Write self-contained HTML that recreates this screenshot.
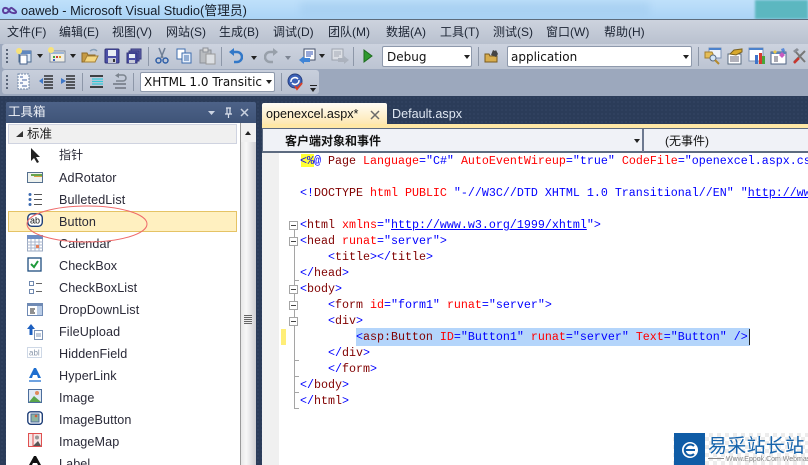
<!DOCTYPE html>
<html><head><meta charset="utf-8"><style>
html,body{margin:0;padding:0;width:808px;height:465px;overflow:hidden}
body{background:#2b3c59;font-family:"Liberation Sans","Noto Sans CJK SC",sans-serif;font-size:12px;color:#111}
div,span,svg{position:absolute}
#root{left:0;top:0;width:808px;height:465px;overflow:hidden}
.t{white-space:nowrap}
.m{top:23px;font-size:12px;color:#1c2433;white-space:nowrap}
.sep{width:1px;background:#8d97a8}
.ar{width:0;height:0;border:3.5px solid transparent;border-top:4px solid #222;border-bottom:0}
.grip{width:2px;height:14px;background:repeating-linear-gradient(#5a6578 0 2px,transparent 2px 4px)}
.combo{background:#fff;border:1px solid #8e99ac;border-radius:2px;box-sizing:border-box;font-family:"DejaVu Sans",sans-serif;font-size:12px;color:#111;white-space:nowrap;overflow:hidden}
.i{left:59px;font-size:12.6px;letter-spacing:.1px;color:#2a2a38;white-space:nowrap;height:16px;line-height:16px}
.l{left:300px;font-family:"Liberation Mono",monospace;font-size:11.67px;line-height:16px;height:16px;white-space:pre;color:#00f}
.l span{position:static}
.r{color:#f00}.d{color:#800000}
.u{text-decoration:underline}
.box{left:289px;width:7px;height:7px;border:1px solid #a5a5a5;background:#fff}
.box:after{content:"";position:absolute;left:1px;top:3px;width:5px;height:1px;background:#444}
</style></head><body>
<div id="root">

<!-- title bar -->
<div style="left:0;top:0;width:808px;height:20px;background:linear-gradient(#bfe0fa,#a9d3f6)"></div>
<div style="left:300px;top:2px;width:350px;height:14px;background:#9cc7ec;opacity:.45;filter:blur(4px)"></div>
<div style="left:755px;top:0;width:53px;height:19px;background:#5cb7c0;filter:blur(1px)"></div>
<div style="left:0;top:19px;width:808px;height:1px;background:#5d6c7c"></div>
<svg style="left:1px;top:5px" width="16" height="11" viewBox="0 0 16 11"><path d="M8 5.500C6 2 2 2 2 5.500S6 9 8 5.500 10 2 14 5.500 10 9 8 5.500" fill="none" stroke="#5b3f9c" stroke-width="2"/></svg>
<div class="t" style="left:21px;top:2px;font-size:12.8px;color:#161d28;line-height:17px">oaweb - Microsoft Visual Studio(管理员)</div>

<!-- menu -->
<div style="left:0;top:20px;width:808px;height:24px;background:linear-gradient(#cdd3de,#b9c1cf)"></div>
<div style="left:0;top:44px;width:808px;height:52px;background:#9ca8bd"></div>
<div class="m" style="left:7px">文件(F)</div>
<div class="m" style="left:59px">编辑(E)</div>
<div class="m" style="left:112px">视图(V)</div>
<div class="m" style="left:166px">网站(S)</div>
<div class="m" style="left:219px">生成(B)</div>
<div class="m" style="left:273px">调试(D)</div>
<div class="m" style="left:328px">团队(M)</div>
<div class="m" style="left:386px">数据(A)</div>
<div class="m" style="left:440px">工具(T)</div>
<div class="m" style="left:493px">测试(S)</div>
<div class="m" style="left:546px">窗口(W)</div>
<div class="m" style="left:604px">帮助(H)</div>

<!-- toolbar 1 -->
<div style="left:2px;top:44px;width:806px;height:25px;background:linear-gradient(#cdd3df,#bcc4d2);border-radius:3px 0 0 3px"></div>
<div class="grip" style="left:6px;top:49px"></div>
<svg style="left:15px;top:47px" width="18" height="18"><rect x="4" y="4" width="12" height="11" fill="#dfeaf6" stroke="#4a6a90"/><rect x="5" y="4" width="11" height="3" fill="#5f88c0"/><rect x="5" y="8" width="7" height="9" fill="#fff" stroke="#44618c"/><circle cx="4" cy="4" r="3" fill="#f7e27a"/></svg>
<div class="ar" style="left:37px;top:54px"></div>
<svg style="left:48px;top:47px" width="18" height="18"><rect x="2" y="4" width="15" height="11" fill="#f1eee2" stroke="#7d8aa0"/><rect x="3" y="5" width="13" height="2" fill="#9db5d6"/><rect x="5" y="9" width="2" height="2" fill="#3da13d"/><rect x="8" y="9" width="2" height="2" fill="#d03a3a"/><rect x="11" y="9" width="2" height="2" fill="#d8a020"/><rect x="5" y="12" width="2" height="2" fill="#3f62c0"/><circle cx="3" cy="3" r="3" fill="#f7e27a"/></svg>
<div class="ar" style="left:70px;top:54px"></div>
<svg style="left:81px;top:47px" width="18" height="18"><path d="M1 15V6h5l1 2h7v7z" fill="#c69a43" stroke="#8d6a28"/><path d="M3 15l3-6h11l-3 6z" fill="#f4d681" stroke="#a57f35"/><path d="M9 4q4-3 7 0" fill="none" stroke="#88a0b8" stroke-width="1.500"/></svg>
<svg style="left:104px;top:48px" width="16" height="16"><rect x="1" y="1" width="14" height="14" rx="1" fill="#4b4fa6" stroke="#2f3276"/><rect x="4" y="2" width="8" height="6" fill="#e8edf5"/><rect x="4" y="10" width="8" height="5" fill="#c9ccd8"/><rect x="9" y="11" width="2" height="3" fill="#333"/></svg>
<svg style="left:126px;top:48px" width="16" height="16"><rect x="5" y="1" width="10" height="10" fill="#6466b0" stroke="#37397c"/><rect x="3" y="3" width="10" height="10" fill="#5557a8" stroke="#37397c"/><rect x="1" y="5" width="10" height="10" fill="#4b4fa6" stroke="#2f3276"/><rect x="3" y="6" width="6" height="4" fill="#e8edf5"/><rect x="3" y="12" width="6" height="3" fill="#c9ccd8"/></svg>
<div class="sep" style="left:148px;top:47px;height:19px"></div>
<svg style="left:155px;top:47px" width="14" height="18"><path d="M4 1l4 10M10 1L6 11" stroke="#6f7f95" stroke-width="1.500" fill="none"/><circle cx="3.500" cy="13.500" r="2.500" fill="none" stroke="#2f5fa8" stroke-width="1.500"/><circle cx="10.500" cy="13.500" r="2.500" fill="none" stroke="#2f5fa8" stroke-width="1.500"/></svg>
<svg style="left:176px;top:48px" width="17" height="16"><rect x="1" y="1" width="8" height="10" fill="#fff" stroke="#3d6cae"/><rect x="6" y="5" width="9" height="10" fill="#e8f0fb" stroke="#3d6cae"/><path d="M8 8h5M8 10h5M8 12h5" stroke="#3d6cae"/></svg>
<svg style="left:199px;top:47px" width="17" height="18"><rect x="1" y="3" width="11" height="13" fill="#b9bcc0" stroke="#8c9097"/><rect x="4" y="1" width="5" height="4" fill="#d8d8d8" stroke="#8c9097"/><rect x="7" y="7" width="9" height="10" fill="#dcdfe3" stroke="#999"/></svg>
<div class="sep" style="left:221px;top:47px;height:19px"></div>
<svg style="left:229px;top:47px" width="14" height="17"><path d="M3 5h5a4 4 0 0 1 0 10H5" fill="none" stroke="#3278c8" stroke-width="2.500"/><path d="M0 5l5-4v8z" fill="#3278c8"/></svg>
<div class="ar" style="left:251px;top:56px"></div>
<svg style="left:264px;top:47px" width="14" height="17"><path d="M11 5H6a4 4 0 0 0 0 10h3" fill="none" stroke="#98a0aa" stroke-width="2.500"/><path d="M14 5L9 1v8z" fill="#98a0aa"/></svg>
<div class="ar" style="left:285px;top:56px;border-top-color:#7c8492"></div>
<svg style="left:298px;top:47px" width="19" height="18"><rect x="6" y="2" width="11" height="11" fill="#fff" stroke="#44506a"/><path d="M8 5h7M8 7h7M8 9h5" stroke="#2f4fb0"/><path d="M1 13l5-4v2h6v4H6v2z" fill="#3f84d6"/></svg>
<div class="ar" style="left:319px;top:54px"></div>
<svg style="left:331px;top:47px" width="19" height="18" opacity=".55"><rect x="1" y="2" width="11" height="11" fill="#eee" stroke="#7a808a"/><path d="M3 5h7M3 7h7M3 9h5" stroke="#8a8f98"/><path d="M18 13l-5-4v2H7v4h6v2z" fill="#9ba1aa"/></svg>
<div class="sep" style="left:353px;top:47px;height:19px"></div>
<svg style="left:362px;top:48px" width="12" height="16"><path d="M2 2l8 6-8 6z" fill="#2e9a2e" stroke="#1d6b1d"/></svg>
<div class="combo" style="left:382px;top:46px;width:90px;height:21px;line-height:20px;padding-left:4px">Debug</div>
<div class="ar" style="left:464px;top:55px"></div>
<div class="sep" style="left:478px;top:47px;height:19px"></div>
<svg style="left:484px;top:48px" width="15" height="16"><path d="M1 14V6h4l1 2h7v6z" fill="#d8ad4e" stroke="#7a5a1e"/><path d="M7 7l2-5 2 1 1-1 2 4-2 3z" fill="#444"/></svg>
<div class="combo" style="left:507px;top:46px;width:185px;height:21px;line-height:20px;padding-left:3px">application</div>
<div class="ar" style="left:683px;top:55px"></div>
<div class="sep" style="left:698px;top:47px;height:19px"></div>
<svg style="left:704px;top:47px" width="18" height="18"><rect x="5" y="1" width="12" height="10" fill="#eef3fa" stroke="#7d93b4"/><rect x="5" y="1" width="12" height="2" fill="#4c82cc"/><path d="M1 5h7l1 2v4H1z" fill="#e5bd57" stroke="#a47f2c"/><circle cx="9" cy="11" r="3" fill="#d3e6f8" stroke="#5a6b80"/><path d="M11 13l4 4" stroke="#b58a2d" stroke-width="2"/></svg>
<svg style="left:726px;top:47px" width="18" height="18"><rect x="2" y="7" width="13" height="10" fill="#fff" stroke="#5a6b80"/><path d="M4 10h9M4 12h9M4 14h9" stroke="#667"/><path d="M4 7l4-4 8-1v3l-6 3z" fill="#d9a92c" stroke="#7c6220"/></svg>
<svg style="left:748px;top:47px" width="18" height="18"><rect x="1" y="1" width="14" height="13" fill="#fff" stroke="#7d93b4"/><rect x="1" y="1" width="14" height="2" fill="#4c82cc"/><rect x="7" y="8" width="3" height="9" fill="#3f74c9"/><rect x="11" y="6" width="3" height="11" fill="#d63a2e"/><rect x="14" y="9" width="3" height="8" fill="#49a53a"/></svg>
<svg style="left:770px;top:47px" width="18" height="18"><rect x="1" y="5" width="15" height="12" fill="#fff" stroke="#4f6485"/><rect x="1" y="5" width="15" height="2" fill="#5a82b8"/><path d="M4 10h4M4 12h4M4 14h4" stroke="#556"/><path d="M9 8l3-3 3 3-3 3z" fill="#c85ac0"/><path d="M5 3l2 2-2 2-2-2z" fill="#e8c84a"/><path d="M11 2l3-1 1 3-3 1z" fill="#5a8ad8"/></svg>
<svg style="left:792px;top:47px" width="16" height="18"><path d="M2 15L13 4M13 15L3 4" stroke="#777" stroke-width="2"/><path d="M2 16l5-5" stroke="#c8352d" stroke-width="2.500"/><path d="M1 4l4-3 2 2-4 3z" fill="#8a8f98"/></svg>

<!-- toolbar 2 -->
<div style="left:2px;top:70px;width:317px;height:24px;background:linear-gradient(#c8cfdc,#b9c1d0);border-radius:3px"></div>
<div class="grip" style="left:6px;top:75px"></div>
<svg style="left:17px;top:73px" width="13" height="17"><rect x="1" y="1" width="11" height="15" fill="#f8fafd" stroke="#6e86a8" stroke-dasharray="2 1"/><path d="M3 4h3M5 7h5M3 10h3M5 13h5" stroke="#4463a0"/></svg>
<svg style="left:38px;top:73px" width="16" height="17"><path d="M6 3h9M6 6h9M6 9h9M6 12h9M6 15h9" stroke="#111" stroke-width="1.300"/><path d="M1 8l4-3v6z" fill="#3f78c8"/></svg>
<svg style="left:60px;top:73px" width="16" height="17"><path d="M6 3h9M6 6h9M6 9h9M6 12h9M6 15h9" stroke="#111" stroke-width="1.300"/><path d="M6 8L1 5v6z" fill="#3f78c8"/></svg>
<div class="sep" style="left:82px;top:73px;height:18px"></div>
<svg style="left:89px;top:74px" width="15" height="15"><path d="M1 2h13M1 13h13" stroke="#111" stroke-width="1.500"/><path d="M3 5h11M3 7.500h11M3 10h11" stroke="#35c8d8" stroke-width="1.300"/></svg>
<svg style="left:112px;top:73px" width="15" height="17"><path d="M4 8h7a3 3 0 0 0 0-6H6" fill="none" stroke="#7b838e" stroke-width="1.500"/><path d="M7 0L3 2.500 7 5z" fill="#7b838e"/><path d="M1 11h13M3 15h11" stroke="#6e7580" stroke-width="1.500"/></svg>
<div class="sep" style="left:133px;top:73px;height:18px"></div>
<div class="combo" style="left:140px;top:72px;width:135px;height:20px;line-height:18px;padding-left:3px;font-size:12px">XHTML 1.0 Transitic</div>
<div class="ar" style="left:266px;top:80px"></div>
<div class="sep" style="left:281px;top:73px;height:18px"></div>
<svg style="left:287px;top:73px" width="18" height="18"><circle cx="8" cy="8" r="7" fill="#3d62b8" stroke="#27407f"/><path d="M4 9a4 4 0 0 1 7-3M12 7a4 4 0 0 1-7 3" stroke="#fff" fill="none" stroke-width="1.500"/><path d="M8 13l2 3 5-6" stroke="#d8402a" fill="none" stroke-width="2"/></svg>
<div style="left:310px;top:85px;width:7px;height:1px;background:#222"></div>
<div class="ar" style="left:310px;top:88px"></div>

<!-- dark bg -->
<div style="left:0;top:96px;width:808px;height:369px;background-color:#2b3c59;background-image:radial-gradient(#3b4d6c 0.7px,transparent 0.8px);background-size:4px 4px"></div>

<!-- toolbox -->
<div style="left:6px;top:102px;width:250px;height:21px;background:linear-gradient(#4d6288,#3f5478);border-radius:2px 2px 0 0"></div>
<div class="t" style="left:8px;top:104px;font-size:12.5px;color:#f0f3f8;line-height:17px">工具箱</div>
<svg style="left:205px;top:106px" width="50" height="14"><path d="M3 5h7l-3.500 4z" fill="#ccd4e2"/><path d="M21 2h5M22 2v6h3V2M20 8h7M23.500 8v4" stroke="#dde3ee" fill="none" stroke-width="1.200"/><path d="M36 3l7 7M43 3l-7 7" stroke="#c9d1df" stroke-width="1.500"/></svg>
<div style="left:6px;top:123px;width:234px;height:342px;background:#fff"></div>
<div style="left:240px;top:123px;width:16px;height:342px;background:#f0f0f0;border-left:1px solid #9a9a9a;box-sizing:border-box"></div>
<div style="left:241px;top:142px;width:15px;height:323px;background:linear-gradient(90deg,#e8e8e8,#f7f7f7 35%,#cfcfd3)"></div>
<div class="ar" style="left:245px;top:131px;border:3px solid transparent;border-bottom:4px solid #222;border-top:0"></div>
<div style="left:244px;top:315px;width:8px;height:9px;background:repeating-linear-gradient(#666 0 1px,#eee 1px 2px)"></div>
<div style="left:8px;top:124px;width:229px;height:20px;background:#f0f0f0;border:1px solid #cfd3e0;box-sizing:border-box"></div>
<svg style="left:16px;top:131px" width="8" height="7"><path d="M7 0v6H0z" fill="#333"/></svg>
<div class="t" style="left:27px;top:126px;font-size:12.5px;color:#222;line-height:16px">标准</div>

<div style="left:8px;top:211px;width:229px;height:21px;background:#fff0c0;border:1px solid #e5c365;box-sizing:border-box"></div>

<div class="i" style="top:147px;font-size:12px">指针</div>
<div class="i" style="top:170px">AdRotator</div>
<div class="i" style="top:192px">BulletedList</div>
<div class="i" style="top:214px">Button</div>
<div class="i" style="top:236px">Calendar</div>
<div class="i" style="top:258px">CheckBox</div>
<div class="i" style="top:280px">CheckBoxList</div>
<div class="i" style="top:302px">DropDownList</div>
<div class="i" style="top:324px">FileUpload</div>
<div class="i" style="top:346px">HiddenField</div>
<div class="i" style="top:368px">HyperLink</div>
<div class="i" style="top:390px">Image</div>
<div class="i" style="top:412px">ImageButton</div>
<div class="i" style="top:434px">ImageMap</div>
<div class="i" style="top:456px">Label</div>

<svg style="left:27px;top:147px" width="16" height="17"><path d="M4 1v13l3-3 3 5 2-1-3-5h4z" fill="#222"/></svg>
<svg style="left:27px;top:171px" width="17" height="13"><rect x="0.500" y="1.500" width="15" height="10" fill="#eef2ee" stroke="#55708f"/><rect x="4" y="3" width="11" height="2" fill="#67a44e"/><rect x="7" y="5" width="8" height="1" fill="#d8a040"/></svg>
<svg style="left:27px;top:192px" width="16" height="15"><circle cx="3" cy="2.500" r="1.500" fill="#3c6ab0"/><circle cx="3" cy="7.500" r="1.500" fill="#3c6ab0"/><circle cx="3" cy="12.500" r="1.500" fill="#3c6ab0"/><path d="M7 2.500h8M7 7.500h8M7 12.500h8" stroke="#555"/></svg>
<svg style="left:27px;top:213px" width="17" height="15"><rect x="0.800" y="0.800" width="14.500" height="12.500" rx="4" fill="#fff" stroke="#1f3f78" stroke-width="1.400"/><text x="3" y="10.500" font-family="Liberation Sans" font-size="9" fill="#111">ab</text></svg>
<svg style="left:27px;top:235px" width="16" height="17"><rect x="0.500" y="1" width="15" height="15" fill="#fff" stroke="#9aa9c2"/><rect x="0" y="0" width="16" height="4" fill="#6d8cc4"/><path d="M0 7h16M0 10h16M0 13h16M4 4v12M8 4v12M12 4v12" stroke="#a8b5cc"/><rect x="9" y="10" width="3" height="3" fill="#e57f5a"/></svg>
<svg style="left:27px;top:257px" width="16" height="16"><rect x="1" y="1" width="13" height="13" fill="#fff" stroke="#1f4f80" stroke-width="1.300"/><path d="M4 7l3 3 4-6" stroke="#1e9a3a" stroke-width="2" fill="none"/></svg>
<svg style="left:27px;top:280px" width="16" height="16"><rect x="2.500" y="1.500" width="4" height="4" fill="#fff" stroke="#6f88ae"/><rect x="2.500" y="9.500" width="4" height="4" fill="#fff" stroke="#6f88ae"/><path d="M9 3.500h6M9 11.500h6" stroke="#666"/></svg>
<svg style="left:27px;top:302px" width="17" height="15"><rect x="0.500" y="1.500" width="15" height="12" fill="#fff" stroke="#6f8ab4"/><rect x="0" y="1" width="16" height="3" fill="#6f8ab4"/><rect x="10" y="4" width="5" height="9" fill="#b9cce6"/><path d="M3 7h5M3 9h4M3 11h5" stroke="#222"/></svg>
<svg style="left:27px;top:323px" width="17" height="18"><rect x="7.500" y="7.500" width="8" height="9" fill="#fff" stroke="#7c93b6"/><path d="M9 11h5M9 13h5" stroke="#7c93b6"/><path d="M4 1L0 6h2.500v6h3V6H8z" fill="#1c5fc0"/></svg>
<svg style="left:27px;top:345px" width="16" height="15"><rect x="0.500" y="2.500" width="14" height="10" fill="#fff" stroke="#9db0cc" stroke-dasharray="1 1"/><text x="2" y="10.500" font-family="Liberation Sans" font-size="8" fill="#8896aa">abl</text></svg>
<svg style="left:28px;top:367px" width="15" height="17"><path d="M1 11L6 1h2l5 10h-3l-1-3H5l-1 3z" fill="#1f6fd0"/><path d="M1 14h12" stroke="#1f6fd0" stroke-width="1.300"/></svg>
<svg style="left:28px;top:389px" width="15" height="15"><rect x="0.500" y="0.500" width="13" height="13" fill="#dfe8f4" stroke="#4c6d9c"/><path d="M1 13l5-6 7 6z" fill="#5aa54a"/><circle cx="9" cy="4" r="2" fill="#e08a5a"/></svg>
<svg style="left:27px;top:411px" width="17" height="15"><rect x="0.800" y="0.800" width="14.500" height="12.500" rx="3" fill="#fff" stroke="#1f3f78" stroke-width="1.400"/><rect x="4" y="3" width="8" height="8" fill="#8fb4a0" stroke="#4c6d9c"/><circle cx="9" cy="5" r="1.300" fill="#d0603a"/></svg>
<svg style="left:28px;top:433px" width="15" height="15"><rect x="0.500" y="0.500" width="13" height="13" fill="#f6e6e6" stroke="#e05050"/><path d="M5 13L10 8l3 5z" fill="#555"/><circle cx="9" cy="4.500" r="2" fill="#999"/><path d="M5 1v12" stroke="#e05050"/></svg>
<svg style="left:28px;top:456px" width="15" height="9"><path d="M1 9L6 0h2l5 9h-3L9 7H5L4 9z" fill="#111"/></svg>

<svg style="left:20px;top:200px" width="135" height="50"><ellipse cx="67" cy="24" rx="60" ry="18" fill="none" stroke="#ef6a6a" stroke-width="1"/></svg>

<!-- editor -->
<div style="left:262px;top:103px;width:125px;height:22px;background:linear-gradient(#fffdf6,#fde7ae);border-radius:2px 2px 0 0"></div>
<div class="t" style="left:266px;top:106px;font-size:12.6px;color:#111;line-height:16px">openexcel.aspx*</div>
<svg style="left:369px;top:109px" width="12" height="12"><path d="M2 2l8 8M10 2l-8 8" stroke="#6b6b6b" stroke-width="1.500"/></svg>
<div class="t" style="left:392px;top:106px;font-size:12.6px;color:#dfe7f2;line-height:16px">Default.aspx</div>
<div style="left:262px;top:124px;width:546px;height:4px;background:#ffe8a6"></div>
<div style="left:262px;top:128px;width:546px;height:25px;background:#f0f2f7;border:1px solid #5d6b80;border-width:1px 0 2px 1px;box-sizing:border-box"></div>
<div style="left:642px;top:129px;width:2px;height:23px;background:#6d7990"></div>
<div class="ar" style="left:634px;top:139px"></div>
<div class="t" style="left:285px;top:133px;font-size:12px;font-weight:bold;color:#111;line-height:16px">客户端对象和事件</div>
<div class="t" style="left:665px;top:133px;font-size:12px;color:#111;line-height:16px">(无事件)</div>

<div style="left:262px;top:153px;width:546px;height:312px;background:#fff"></div>
<div style="left:262px;top:153px;width:17px;height:312px;background:#f0f0f0"></div>
<div style="left:301px;top:154px;width:13px;height:13px;background:#ffff33"></div>
<div style="left:356px;top:328px;width:394px;height:18px;background:#b4d5fb"></div>
<div style="left:281px;top:329px;width:5px;height:16px;background:#ffee77"></div>
<div style="left:749px;top:329px;width:1px;height:16px;background:#222"></div>

<!-- outline guides -->
<div style="left:294px;top:230px;width:1px;height:55px;background:#a5a5a5"></div>
<div style="left:294px;top:280px;width:5px;height:1px;background:#a5a5a5"></div>
<div style="left:294px;top:294px;width:1px;height:115px;background:#a5a5a5"></div>
<div style="left:294px;top:360px;width:5px;height:1px;background:#a5a5a5"></div>
<div style="left:294px;top:376px;width:5px;height:1px;background:#a5a5a5"></div>
<div style="left:294px;top:392px;width:5px;height:1px;background:#a5a5a5"></div>
<div style="left:294px;top:408px;width:5px;height:1px;background:#a5a5a5"></div>
<div class="box" style="top:221px"></div>
<div class="box" style="top:237px"></div>
<div class="box" style="top:285px"></div>
<div class="box" style="top:301px"></div>
<div class="box" style="top:317px"></div>

<div class="l" style="top:153px">&lt;%<span>@ </span><span class="d">Page</span> <span class="r">Language</span>="C#" <span class="r">AutoEventWireup</span>="true" <span class="r">CodeFile</span>="openexcel.aspx.cs"</div>
<div class="l" style="top:185px">&lt;!<span class="d">DOCTYPE</span> <span class="r">html</span> <span class="r">PUBLIC</span> "-//W3C//DTD XHTML 1.0 Transitional//EN" "<span class="u">http://www.w3.org</span></div>
<div class="l" style="top:217px">&lt;<span class="d">html</span> <span class="r">xmlns</span>="<span class="u">http://www.w3.org/1999/xhtml</span>"&gt;</div>
<div class="l" style="top:233px">&lt;<span class="d">head</span> <span class="r">runat</span>="server"&gt;</div>
<div class="l" style="top:249px">    &lt;<span class="d">title</span>&gt;&lt;/<span class="d">title</span>&gt;</div>
<div class="l" style="top:265px">&lt;/<span class="d">head</span>&gt;</div>
<div class="l" style="top:281px">&lt;<span class="d">body</span>&gt;</div>
<div class="l" style="top:297px">    &lt;<span class="d">form</span> <span class="r">id</span>="form1" <span class="r">runat</span>="server"&gt;</div>
<div class="l" style="top:313px">    &lt;<span class="d">div</span>&gt;</div>
<div class="l" style="top:329px">        &lt;<span class="d">asp:Button</span> <span class="r">ID</span>="Button1" <span class="r">runat</span>="server" <span class="r">Text</span>="Button" /&gt;</div>
<div class="l" style="top:345px">    &lt;/<span class="d">div</span>&gt;</div>
<div class="l" style="top:361px">    &lt;/<span class="d">form</span>&gt;</div>
<div class="l" style="top:377px">&lt;/<span class="d">body</span>&gt;</div>
<div class="l" style="top:393px">&lt;/<span class="d">html</span>&gt;</div>

<!-- watermark -->
<div style="left:673px;top:433px;width:135px;height:32px;background:#fff;background-image:linear-gradient(45deg,#ececec 25%,transparent 25%,transparent 75%,#ececec 75%),linear-gradient(45deg,#ececec 25%,transparent 25%,transparent 75%,#ececec 75%);background-size:8px 8px;background-position:0 0,4px 4px"></div>
<div style="left:674px;top:433px;width:31px;height:32px;background:#0f5ca6"></div>
<svg style="left:680px;top:440px" width="20" height="20"><circle cx="10" cy="10" r="8" fill="#fff"/><path d="M5 10h10M14 6a5.500 5.500 0 1 0 0 8" fill="none" stroke="#0f5ca6" stroke-width="2"/></svg>
<div class="t" style="left:708px;top:433px;font-size:19px;color:#1463ac;line-height:24px;letter-spacing:.3px;font-family:'Noto Sans CJK SC',sans-serif">易采站长站</div>
<div style="left:708px;top:458px;width:16px;height:1px;background:#888"></div>
<div class="t" style="left:726px;top:455px;font-size:7px;color:#888;line-height:9px;width:82px;overflow:hidden">Www.Eppok.Com Webmaster</div>
</div>
</body></html>
